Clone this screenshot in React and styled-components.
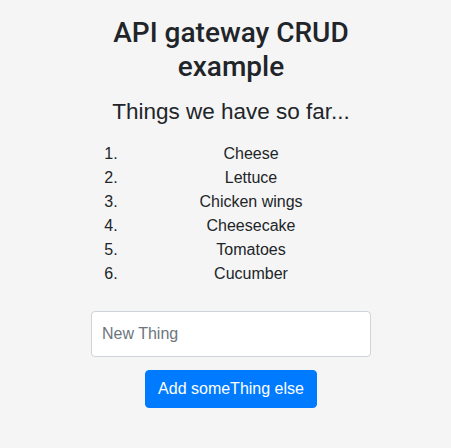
import React, { useState } from 'react';
import styled, { createGlobalStyle } from 'styled-components';

const GlobalStyle = createGlobalStyle`
  html, body {
    margin: 0;
    padding: 0;
    background: #f5f5f5;
  }

  body {
    font-family: "Liberation Sans", Arial, sans-serif;
    font-size: 16px;
    line-height: 1.5;
    color: #212529;
  }

  * {
    box-sizing: border-box;
  }
`;

const Page = styled.div`
  display: flex;
  justify-content: center;
  padding: 16px 0 40px 11px;
`;

const Column = styled.main`
  width: 280px;
  display: flex;
  flex-direction: column;
  text-align: center;
`;

const Title = styled.h1`
  margin: 0 0 15px;
  font-family: Roboto, "Liberation Sans", sans-serif;
  font-size: 28px;
  font-weight: 500;
  line-height: 1.2;
`;

const Subtitle = styled.h2`
  margin: 0 0 15px;
  font-size: 22.5px;
  font-weight: 400;
  line-height: 1.28;
`;

const ThingList = styled.ol`
  margin: 0 0 25px;
  padding-left: 40px;
  text-align: center;
`;

const ThingItem = styled.li`
  line-height: 24px;

  &::marker {
    content: counter(list-item) ".   ";
  }
`;

const Field = styled.input`
  display: block;
  width: 100%;
  height: 46px;
  padding: 6px 10px;
  font-family: inherit;
  font-size: 16px;
  color: #495057;
  background: #fff;
  border: 1px solid #ced4da;
  border-radius: 4px;
  outline: none;

  &::placeholder {
    color: #6c757d;
  }
`;

const AddButton = styled.button`
  align-self: center;
  margin-top: 13px;
  height: 38px;
  padding: 0 12px;
  font-family: inherit;
  font-size: 16px;
  color: #fff;
  background: #007bff;
  border: 1px solid #007bff;
  border-radius: 4px;
  cursor: pointer;
`;

const things = ['Cheese', 'Lettuce', 'Chicken wings', 'Cheesecake', 'Tomatoes', 'Cucumber'];

const App = () => {
  const [name, setName] = useState('');

  return (
    <>
      <GlobalStyle />
      <Page>
        <Column>
          <Title>API gateway CRUD example</Title>
          <Subtitle>Things we have so far...</Subtitle>
          <ThingList>
            {things.map((thing) => (
              <ThingItem key={thing}>{thing}</ThingItem>
            ))}
          </ThingList>
          <Field
            type="text"
            placeholder="New Thing"
            value={name}
            onChange={(event) => setName(event.target.value)}
          />
          <AddButton type="button">Add someThing else</AddButton>
        </Column>
      </Page>
    </>
  );
};

export default App;
